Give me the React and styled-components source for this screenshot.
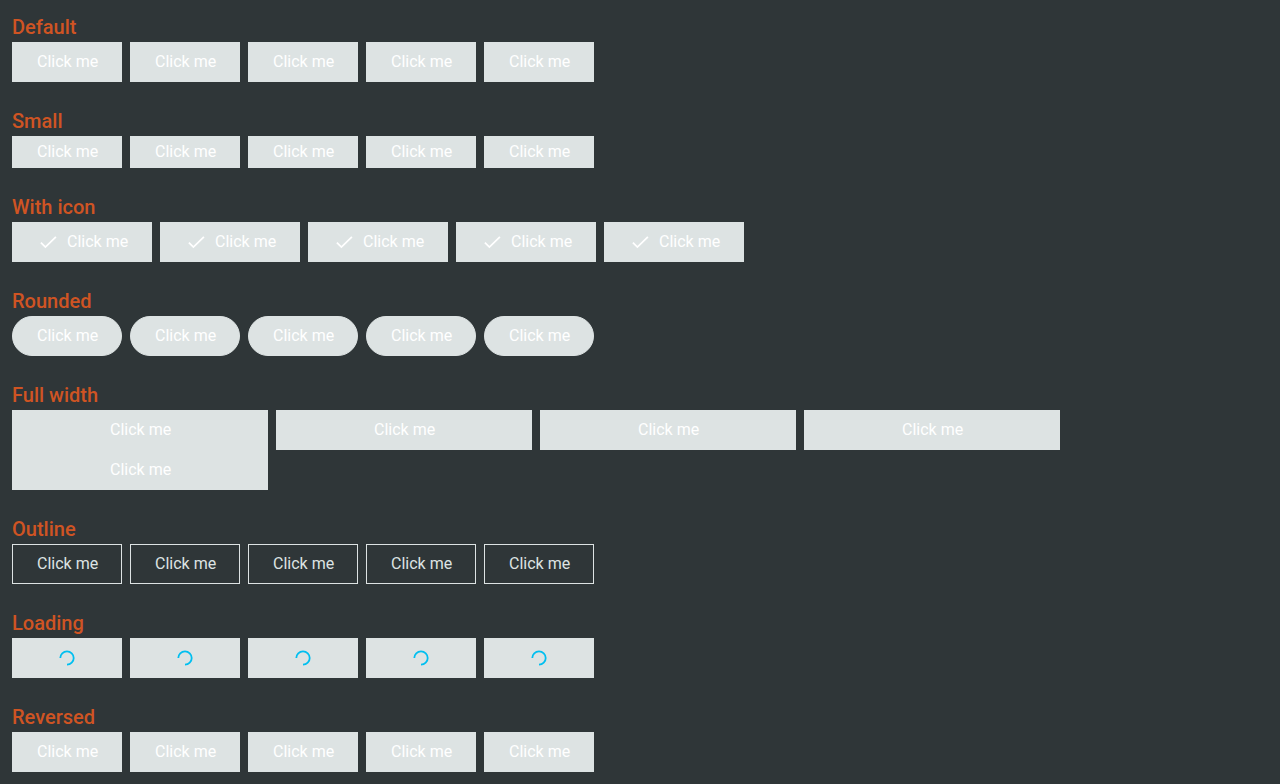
import React from 'react';
import styled, { createGlobalStyle, css } from 'styled-components';

const GlobalStyle = createGlobalStyle`
  *, *::before, *::after { box-sizing: border-box; }
  body {
    margin: 0;
    background: #2f3638;
    color: #dde3e3;
    font-family: Roboto, 'Liberation Sans', sans-serif;
    font-size: 16px;
  }
`;

const Page = styled.main`
  display: flex;
  flex-direction: column;
  gap: 24px;
  padding: 12px;
`;

const Title = styled.h2`
  margin: 0;
  font-size: 20px;
  font-weight: 500;
  line-height: 30px;
  color: #cf5423;
`;

const Row = styled.div`
  display: flex;
  flex-wrap: wrap;
  column-gap: 8px;
`;

const buttonWidth = ({ $wide, $icon }) => {
  if ($wide) return '20vw';
  return $icon ? '140px' : '110px';
};

const Button = styled.button`
  display: inline-flex;
  align-items: center;
  justify-content: center;
  gap: 6px;
  width: ${buttonWidth};
  height: ${({ $small }) => ($small ? '32px' : '40px')};
  padding: 0 24px;
  border: 1px solid #dde3e3;
  border-radius: ${({ $rounded }) => ($rounded ? '20px' : '0')};
  background: #dde3e3;
  color: #fff;
  font: inherit;
  line-height: 20px;
  cursor: pointer;

  ${({ $outline }) =>
    $outline &&
    css`
      background: transparent;
      color: #dde3e3;
    `}
`;

const Label = styled.span`
  flex: none;
  width: 60px;
  text-align: left;
  white-space: nowrap;
`;

const Icon = styled.svg`
  flex: none;
  width: 24px;
  height: 24px;
`;

const CheckIcon = () => (
  <Icon viewBox="0 0 24 24" fill="none" stroke="currentColor" strokeWidth="1.8" aria-hidden="true">
    <path d="M3.9 12.7L8.4 17.1L18.9 6.8" />
  </Icon>
);

const Spinner = () => (
  <Icon viewBox="0 0 24 24" fill="none" stroke="#00bff0" strokeWidth="1.8" aria-hidden="true">
    <path d="M5.3 12A6.7 6.7 0 1 1 12 18.7" />
  </Icon>
);

const sections = [
  { title: 'Default' },
  { title: 'Small', small: true },
  { title: 'With icon', icon: true },
  { title: 'Rounded', rounded: true },
  { title: 'Full width', wide: true },
  { title: 'Outline', outline: true },
  { title: 'Loading', loading: true },
  { title: 'Reversed' },
];

const variants = ['primary', 'secondary', 'success', 'warning', 'danger'];

export default function App() {
  return (
    <>
      <GlobalStyle />
      <Page>
        {sections.map(({ title, small, icon, rounded, wide, outline, loading }) => (
          <section key={title}>
            <Title>{title}</Title>
            <Row>
              {variants.map((variant) => (
                <Button
                  key={variant}
                  type="button"
                  $small={small}
                  $icon={icon}
                  $rounded={rounded}
                  $wide={wide}
                  $outline={outline}
                  aria-label={loading ? 'Loading' : undefined}
                  aria-busy={loading}
                >
                  {icon && <CheckIcon />}
                  {loading ? <Spinner /> : <Label>Click me</Label>}
                </Button>
              ))}
            </Row>
          </section>
        ))}
      </Page>
    </>
  );
}
